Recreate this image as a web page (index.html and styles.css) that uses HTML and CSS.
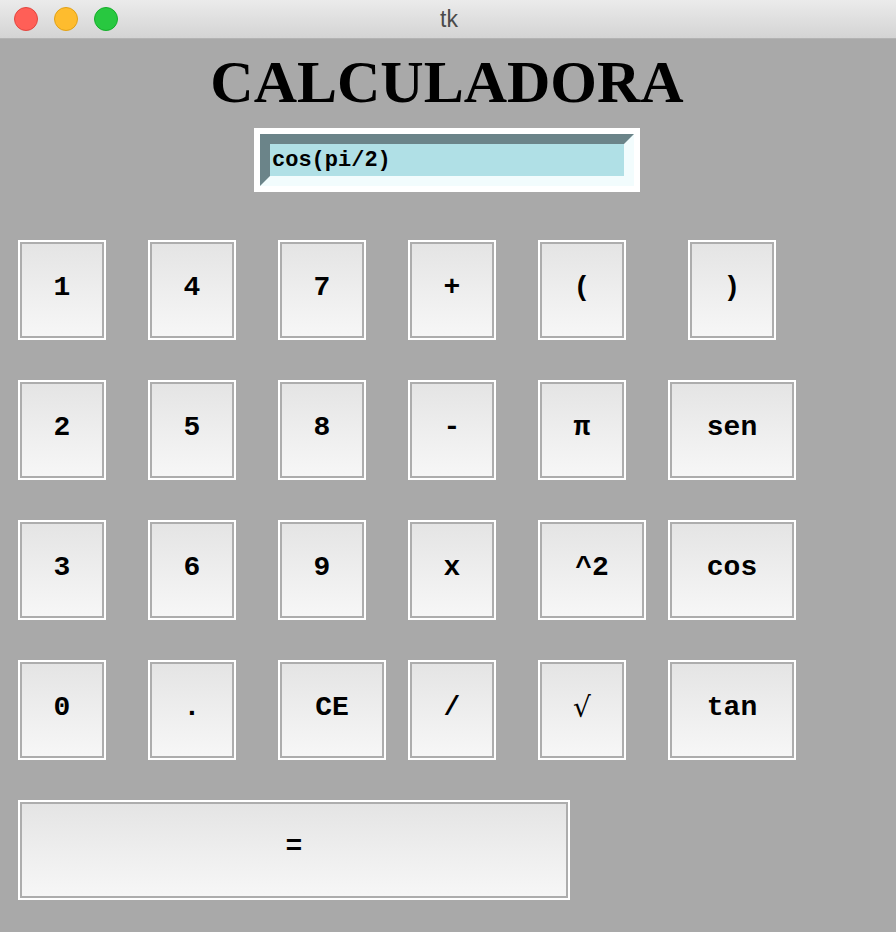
FILE: index.html
```html
<!DOCTYPE html>
<html lang="es">
<head>
<meta charset="utf-8">
<title>tk</title>
<link rel="stylesheet" href="styles.css">
</head>
<body>
<div class="window">
  <div class="titlebar">
    <div class="lights">
      <span class="light red"></span>
      <span class="light yellow"></span>
      <span class="light green"></span>
    </div>
    <div class="wtitle">tk</div>
  </div>
  <main class="app">
    <h1 class="heading">CALCULADORA</h1>
    <div class="entry-frame">
      <div class="entry">cos(pi/2)</div>
    </div>
    <div class="keys">
      <button class="key">1</button>
      <button class="key">4</button>
      <button class="key">7</button>
      <button class="key">+</button>
      <button class="key">(</button>
      <button class="key center">)</button>

      <button class="key">2</button>
      <button class="key">5</button>
      <button class="key">8</button>
      <button class="key">-</button>
      <button class="key">π</button>
      <button class="key wide">sen</button>

      <button class="key">3</button>
      <button class="key">6</button>
      <button class="key">9</button>
      <button class="key">x</button>
      <button class="key mid">^2</button>
      <button class="key wide">cos</button>

      <button class="key">0</button>
      <button class="key">.</button>
      <button class="key mid">CE</button>
      <button class="key">/</button>
      <button class="key sqrt">√</button>
      <button class="key wide">tan</button>

      <button class="key equals">=</button>
    </div>
  </main>
</div>
</body>
</html>
```
FILE: styles.css
```css
html, body {
  margin: 0;
  padding: 0;
  background: #a9a9a9;
}

.window {
  width: 896px;
  height: 932px;
  overflow: hidden;
  background: #a9a9a9;
}

.titlebar {
  height: 39px;
  box-sizing: border-box;
  border-bottom: 1px solid #b3b3b3;
  background: linear-gradient(#ebebeb, #d4d4d4);
  display: flex;
  align-items: center;
  position: relative;
}

.lights {
  display: flex;
  gap: 16px;
  padding-left: 14px;
  position: relative;
  z-index: 1;
}

.light {
  width: 24px;
  height: 24px;
  border-radius: 50%;
  box-sizing: border-box;
}

.red { background: #ff5f57; border: 1px solid #e2463f; }
.yellow { background: #febc2e; border: 1px solid #e1a116; }
.green { background: #28c840; border: 1px solid #14ae2a; }

.wtitle {
  position: absolute;
  left: 0;
  right: 0;
  top: 0;
  bottom: 0;
  display: flex;
  align-items: center;
  justify-content: center;
  font-family: "Liberation Sans", Arial, sans-serif;
  font-size: 23px;
  color: #4a4a4a;
  padding-left: 2px;
}

.app {
  display: flex;
  flex-direction: column;
  align-items: center;
}

.heading {
  margin: 3px 0 0 0;
  height: 79px;
  line-height: 80px;
  font-family: "Liberation Serif", "Times New Roman", serif;
  font-weight: bold;
  font-size: 60px;
  color: #000;
  padding-right: 2px;
}

.entry-frame {
  margin-top: 7px;
  margin-right: 2px;
  background: #ffffff;
  padding: 6px;
}

.entry {
  width: 352px;
  height: 32px;
  border-style: solid;
  border-width: 10px;
  border-color: #6b8489 #f2fcfd #f2fcfd #6b8489;
  background: #b0e0e6;
  font-family: "Liberation Mono", "Courier New", monospace;
  font-weight: bold;
  font-size: 22px;
  line-height: 34px;
  padding-left: 2px;
  color: #000;
  box-sizing: content-box;
}

.keys {
  align-self: stretch;
  margin-top: 48px;
  padding-left: 18px;
  display: grid;
  grid-template-columns: repeat(5, 130px) 128px;
  grid-auto-rows: 100px;
  row-gap: 40px;
  justify-items: start;
}

.key {
  width: 88px;
  height: 100px;
  box-sizing: border-box;
  border: 2px solid #ffffff;
  box-shadow: inset 0 0 0 2px #adadad;
  background: linear-gradient(#e4e4e4, #f7f7f7);
  font-family: "Liberation Mono", "Courier New", monospace;
  font-weight: bold;
  font-size: 28px;
  color: #000;
  padding: 0 0 6px 0;
  margin: 0;
  cursor: pointer;
}

.center { justify-self: center; }
.mid { width: 108px; }
.wide { width: 128px; }

.sqrt {
  font-family: "DejaVu Serif", "Liberation Serif", serif;
  font-weight: normal;
  font-size: 28px;
}

.equals {
  grid-column: 1 / -1;
  width: 552px;
  padding-bottom: 8px;
}
```
